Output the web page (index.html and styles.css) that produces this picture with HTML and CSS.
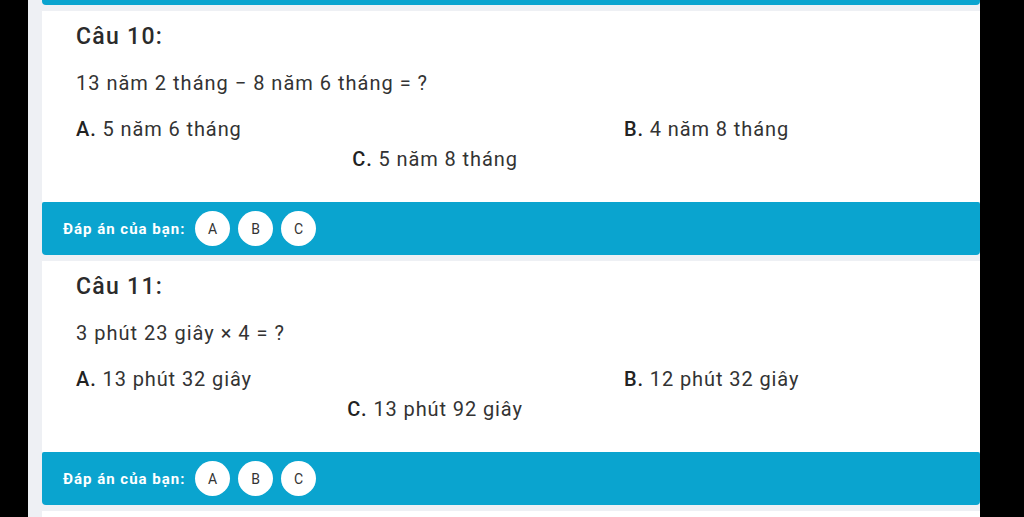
FILE: index.html
```html
<!DOCTYPE html>
<html lang="vi">
<head>
    <meta charset="UTF-8">
    <meta name="viewport" content="width=device-width, initial-scale=1.0">
    <title>Bài kiểm tra</title>
    <link rel="stylesheet" href="styles.css">
</head>
<body>
    <div class="page">
        <div class="answer-bar tail"></div>

        <div class="question">
            <div class="card">
                <h3>Câu 10:</h3>
                <p class="prompt">13 năm 2 tháng − 8 năm 6 tháng = ?</p>
                <div class="options">
                    <div class="opt"><b>A.</b> 5 năm 6 tháng</div>
                    <div class="opt"><b>B.</b> 4 năm 8 tháng</div>
                    <div class="opt center"><b>C.</b> 5 năm 8 tháng</div>
                </div>
            </div>
            <div class="answer-bar">
                <span class="label">Đáp án của bạn:</span>
                <span class="choice">A</span>
                <span class="choice">B</span>
                <span class="choice">C</span>
            </div>
        </div>

        <div class="question">
            <div class="card">
                <h3>Câu 11:</h3>
                <p class="prompt">3 phút 23 giây × 4 = ?</p>
                <div class="options">
                    <div class="opt"><b>A.</b> 13 phút 32 giây</div>
                    <div class="opt"><b>B.</b> 12 phút 32 giây</div>
                    <div class="opt center"><b>C.</b> 13 phút 92 giây</div>
                </div>
            </div>
            <div class="answer-bar">
                <span class="label">Đáp án của bạn:</span>
                <span class="choice">A</span>
                <span class="choice">B</span>
                <span class="choice">C</span>
            </div>
        </div>

        <div class="card stub"></div>
    </div>
</body>
</html>
```

FILE: styles.css
```css
html, body { margin: 0; height: 100%; }
body {
    background: #000;
    font-family: Roboto, "Liberation Sans", sans-serif;
    color: #333;
    overflow: hidden;
}
.page {
    margin: 0 44px 0 28px;
    padding-left: 14px;
    height: 100%;
    background: #eef0f4;
    display: flex;
    flex-direction: column;
    gap: 6px;
}
.question { flex-shrink: 0; }
.card {
    background: #fff;
    padding: 13px 34px 30px;
}
.card h3 {
    margin: 0;
    font-size: 23px;
    line-height: 26px;
    font-weight: 500;
    letter-spacing: 1.3px;
    color: #2b2b2b;
}
.prompt {
    margin: 20px 0 0;
    font-size: 20px;
    line-height: 26px;
    letter-spacing: 1px;
}
.options {
    margin-top: 20px;
    width: 718px;
    display: grid;
    grid-template-columns: 548px 170px;
    row-gap: 4px;
    font-size: 20px;
    line-height: 26px;
    letter-spacing: 0.9px;
    white-space: nowrap;
}
.opt b { font-weight: 500; color: #222; }
.opt.center { grid-column: 1 / -1; justify-self: center; }

.answer-bar {
    height: 53px;
    background: #0aa4cf;
    border-radius: 2px 2px 4px 4px;
    display: flex;
    align-items: center;
    padding-left: 21px;
}
.answer-bar.tail { height: 5px; flex-shrink: 0; padding: 0; border-radius: 0 0 4px 4px; }
.label {
    color: #fff;
    font-size: 15px;
    font-weight: bold;
    letter-spacing: 1px;
    margin-right: 10px;
}
.choice {
    width: 35px;
    height: 35px;
    border-radius: 50%;
    background: #fff;
    display: flex;
    align-items: center;
    justify-content: center;
    font-size: 14px;
    letter-spacing: 0.5px;
    color: #333;
    margin-right: 8px;
}
.stub { flex: 1; padding: 0; }
```
